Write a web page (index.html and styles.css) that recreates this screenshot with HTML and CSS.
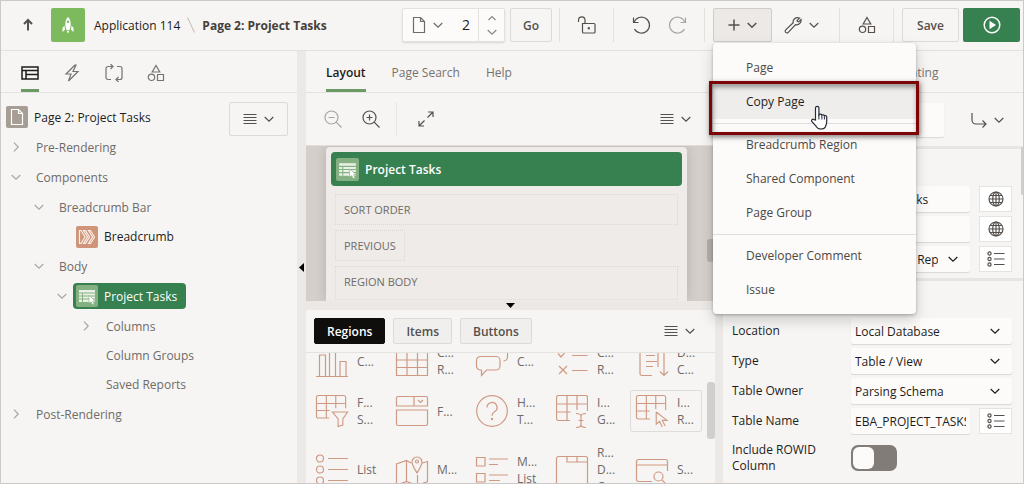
FILE: index.html
```html
<!DOCTYPE html>
<html lang="en">
<head>
  <meta charset="UTF-8" />
  <meta name="viewport" content="width=device-width, initial-scale=1.0"/>
  <title>Page Designer</title>
  <link rel="stylesheet" href="styles.css">
</head>
<body>
  <!-- shared icons -->
  <svg class="sprite" aria-hidden="true">
    <symbol id="chevron" viewBox="0 0 10 10"><path d="M.7 3 5 7.2 9.3 3"/></symbol>
    <symbol id="chevron-up" viewBox="0 0 10 10"><path d="M1.5 7 5 3.5 8.500 7"/></symbol>
    <symbol id="chevron-right" viewBox="0 0 10 10"><path d="M3 .7 7.200 5 3 9.300"/></symbol>
    <symbol id="page" viewBox="0 0 18 18"><path d="M3.500 1.500h7l4 4v11h-11zM10.500 1.500v4h4"/></symbol>
    <symbol id="lines" viewBox="0 0 14 12"><path d="M.5 1.500h13M.5 4.500h13M.5 7.500h13M.5 10.500h13"/></symbol>
    <symbol id="shapes" viewBox="0 0 18 18"><path d="M9 1.500 12.800 8H5.200zM10.500 10.500h6v6h-6z"/><circle cx="4.500" cy="13.300" r="3.200"/></symbol>
    <symbol id="globe" viewBox="0 0 16 16"><circle cx="8" cy="8" r="7"/><ellipse cx="8" cy="8" rx="3.300" ry="7"/><path d="M8 1v14M1 8h14M2 4.500h12M2 11.500h12"/></symbol>
    <symbol id="list" viewBox="0 0 18 16"><circle cx="2.500" cy="2.500" r="1.600"/><circle cx="2.500" cy="8" r="1.600"/><circle cx="2.500" cy="13.500" r="1.600"/><path d="M7 2.500h10.500M7 8h10.500M7 13.500h10.500"/></symbol>
    <symbol id="report" viewBox="0 0 22 22">
      <rect width="22" height="22" rx="2" fill="#85b082" stroke="none"/>
      <path d="M3 5h16v12H3z" fill="#e9f1e4" stroke="none"/>
      <path d="M3 8h16M3 11h16M3 14h16M6.500 8v9" stroke="#85b082"/>
      <path d="M13 10.500v8l2-1.700 1.500 3 1.700-.9-1.500-2.900h2.800z" fill="#fff" stroke="#85b082" stroke-width=".6"/>
    </symbol>
    <symbol id="grid-part" viewBox="0 0 32 32"><path d="M14 25.500H2.500a2 2 0 0 1-2-2v-21a2 2 0 0 1 2-2h27a2 2 0 0 1 2 2V16M.5 9h31M.5 17h14M11 .5v25M21 .5V15"/></symbol>
  </svg>

  <div class="designer">
    <header class="header">
      <nav class="crumbs">
        <button class="icon-button" aria-label="Up"><svg class="icon heavy" width="12" height="14" viewBox="0 0 12 14"><path d="M6 12.500V2.500M2 6 6 2 10 6"/></svg></button>
        <span class="app-icon">
          <svg width="14" height="18" viewBox="0 0 14 18"><path fill="#fff" d="M7 1C5 3 4.200 5 4.300 8.500 4.400 11 5 12.500 5.500 14h3c.5-1.500 1.100-3 1.200-5.500C9.800 5 9 3 7 1zM3.500 9.500 1.500 12v4l2.500-2.200zM10.500 9.500l2 2.500v4L10 13.800zM5.500 14.800h3L7 17.500z"/><circle cx="7" cy="5.800" r="1.200" fill="#7db95d"/></svg>
        </span>
        <a href="#">Application 114</a>
        <svg class="slash" width="8" height="16" viewBox="0 0 8 16"><path d="M.5.5l7 15"/></svg>
        <strong>Page 2: Project Tasks</strong>
      </nav>
      <div class="toolbar">
        <div class="page-picker">
          <button class="picker-list" aria-label="Pages"><svg class="icon" width="18" height="18"><use href="#page"/></svg><svg class="icon" width="10" height="10"><use href="#chevron"/></svg></button>
          <input type="text" value="2" aria-label="Page number">
          <div class="stepper">
            <button aria-label="Next page"><svg class="icon" width="10" height="10"><use href="#chevron-up"/></svg></button>
            <button aria-label="Previous page"><svg class="icon" width="10" height="10"><use href="#chevron"/></svg></button>
          </div>
        </div>
        <button class="button go">Go</button>
        <div class="group">
          <button class="icon-button" aria-label="Unlock"><svg class="icon" width="20" height="20" viewBox="0 0 20 20"><path d="M5.500 8.500h11.500a1 1 0 0 1 1 1V17a1 1 0 0 1-1 1h-10.500a1 1 0 0 1-1-1zM8 8.500V5.200a3.200 3.200 0 0 0-6.500 0V7"/><circle cx="11.800" cy="13.300" r=".6"/></svg></button>
        </div>
        <div class="group undo">
          <button class="icon-button" aria-label="Undo"><svg class="icon" width="20" height="20" viewBox="0 0 20 20"><path d="M2.500 2.500v5h5M3 7.300A8 8 0 1 1 3.500 14"/></svg></button>
          <button class="icon-button faded" aria-label="Redo"><svg class="icon" width="20" height="20" viewBox="0 0 20 20"><path d="M17.500 2.500v5h-5M17 7.300A8 8 0 1 0 16.500 14"/></svg></button>
        </div>
        <div class="group create">
          <div class="menu-anchor">
            <button class="button pressed" aria-label="Create" aria-expanded="true"><svg class="icon bold" width="12" height="12" viewBox="0 0 12 12"><path d="M6 .5v11M.5 6h11"/></svg><svg class="icon bold" width="10" height="10"><use href="#chevron"/></svg></button>
            <ul class="menu">
              <li><button>Page</button></li>
              <li class="current">
                <button>Copy Page</button>
                <span class="callout"></span>
                <svg class="pointer" width="20" height="26" viewBox="0 0 20 26"><path fill="#fff" stroke="#252a38" stroke-width="1.200" d="M5.500 15V3a1.700 1.700 0 0 1 3.400 0v7c.8-1.200 2.700-1 3 .2.900-.8 2.300-.4 2.500.6 1-.5 2.300 0 2.300 1.500V17c0 2-.9 3.500-1.400 5-.6 1.500-2 2-4.600 2-2.300 0-3.500-.8-4.700-2.800L1.800 16.500c-.9-1.700.9-3 2.200-1.900z"/><path stroke="#252a38" d="M8.900 10v4.500M11.900 10.500v4M14.400 11.200v3.300"/></svg>
              </li>
              <li class="rule"></li>
              <li><button>Breadcrumb Region</button></li>
              <li><button>Shared Component</button></li>
              <li><button>Page Group</button></li>
              <li class="rule"></li>
              <li><button>Developer Comment</button></li>
              <li><button>Issue</button></li>
            </ul>
          </div>
          <button class="button flat" aria-label="Utilities"><svg class="icon" width="18" height="18" viewBox="0 0 18 18"><path d="M15.500 2 13 4.500l.5 1 1.200.3L17 3.500c.6 3-1.800 5.800-5.500 5.200L4.300 16.300a1.700 1.700 0 0 1-2.600-2.400L9.200 6.700C8.500 3.500 11.500.7 15.500 2z"/></svg><svg class="icon" width="10" height="10"><use href="#chevron"/></svg></button>
        </div>
        <div class="group">
          <button class="icon-button" aria-label="Shared Components"><svg class="icon" width="18" height="18"><use href="#shapes"/></svg></button>
        </div>
        <div class="group actions">
          <button class="button save">Save</button>
          <button class="button run" aria-label="Save and Run Page"><svg width="18" height="18" viewBox="0 0 18 18"><circle cx="9" cy="9" r="7.800" fill="none" stroke="#fff" stroke-width="1.500"/><path fill="#fff" d="M6.500 4.800v8.400L13 9z"/></svg></button>
        </div>
      </div>
    </header>

    <main class="panes">
      <section class="pane tree-pane">
        <div class="tabs icon-tabs">
          <button class="tab active" aria-label="Rendering"><svg class="icon bold" width="18" height="18" viewBox="0 0 18 18"><path d="M1 3h16v12H1zM1 6.500h16M5 6.500V15M5 10.500h12"/></svg></button>
          <button class="tab" aria-label="Dynamic Actions"><svg class="icon" width="18" height="18" viewBox="0 0 18 18"><path d="M12 1 3 10h5l-2.500 7L15 7.500h-5L13 1z"/></svg></button>
          <button class="tab" aria-label="Processing"><svg class="icon" width="18" height="18" viewBox="0 0 18 18"><path d="M6 15.500H3a2 2 0 0 1-2-2v-9a2 2 0 0 1 2-2h5M5.500 0 8 2.500 5.500 5M12 2.500h3a2 2 0 0 1 2 2v9a2 2 0 0 1-2 2h-4M13.500 13 11 15.500l2.500 2.500"/></svg></button>
          <button class="tab" aria-label="Page Shared Components"><svg class="icon" width="18" height="18"><use href="#shapes"/></svg></button>
        </div>
        <div class="tree-body">
          <ul class="tree">
            <li class="root"><span class="node-icon page-icon"><svg class="icon" width="18" height="18"><use href="#page"/></svg></span>Page 2: Project Tasks</li>
            <li class="level-1"><svg class="icon" width="10" height="10"><use href="#chevron-right"/></svg>Pre-Rendering</li>
            <li class="level-1"><svg class="icon" width="10" height="10"><use href="#chevron"/></svg>Components</li>
            <li class="level-2"><svg class="icon" width="10" height="10"><use href="#chevron"/></svg>Breadcrumb Bar</li>
            <li class="level-3 leaf dark">
              <svg class="node-icon" width="22" height="22" viewBox="0 0 22 22"><rect width="22" height="22" rx="2" fill="#cf947a"/><path fill="none" stroke="#fbeee6" stroke-width="1.200" d="M3.500 4.500H5L9 11l-4 6.500H3.500zM7.500 4.500h2l4 6.500-4 6.500h-2l4-6.500zM12.500 4.500h2l4 6.500-4 6.500h-2l4-6.500z"/></svg>Breadcrumb</li>
            <li class="level-2"><svg class="icon" width="10" height="10"><use href="#chevron"/></svg>Body</li>
            <li class="level-3"><svg class="icon" width="10" height="10"><use href="#chevron"/></svg><span class="selected"><svg width="22" height="22"><use href="#report"/></svg>Project Tasks</span></li>
            <li class="level-4"><svg class="icon" width="10" height="10"><use href="#chevron-right"/></svg>Columns</li>
            <li class="level-4 leaf">Column Groups</li>
            <li class="level-4 leaf">Saved Reports</li>
            <li class="level-1"><svg class="icon" width="10" height="10"><use href="#chevron-right"/></svg>Post-Rendering</li>
          </ul>
          <button class="button tree-menu" aria-label="Tree menu"><svg class="icon" width="14" height="12"><use href="#lines"/></svg><svg class="icon" width="10" height="10"><use href="#chevron"/></svg></button>
        </div>
      </section>

      <button class="splitter" aria-label="Collapse tree"><svg width="5" height="9" viewBox="0 0 5 9"><path d="M5 0v9L0 4.500z"/></svg></button>

      <section class="pane center-pane">
        <div class="tabs">
          <button class="tab active">Layout</button>
          <button class="tab">Page Search</button>
          <button class="tab">Help</button>
        </div>
        <div class="layout-bar">
          <button class="icon-button faded" aria-label="Zoom out"><svg class="icon" width="18" height="18" viewBox="0 0 18 18"><circle cx="7.500" cy="7.500" r="6.500"/><path d="M12.200 12.200 17.500 17.500M4.500 7.500h6"/></svg></button>
          <button class="icon-button" aria-label="Zoom in"><svg class="icon" width="18" height="18" viewBox="0 0 18 18"><circle cx="7.500" cy="7.500" r="6.500"/><path d="M12.200 12.200 17.500 17.500M4.500 7.500h6M7.500 4.500v6"/></svg></button>
          <button class="icon-button expand" aria-label="Expand"><svg class="icon" width="16" height="16" viewBox="0 0 16 16"><path d="M10 1H15v5M15 1 9.500 6.500M6 15H1V10M1 15l5.500-5.500"/></svg></button>
          <button class="icon-button layout-menu" aria-label="Layout menu"><svg class="icon" width="14" height="12"><use href="#lines"/></svg><svg class="icon" width="10" height="10"><use href="#chevron"/></svg></button>
        </div>
        <div class="canvas">
          <div class="sheet">
            <div class="region-title"><svg width="23" height="23"><use href="#report"/></svg>Project Tasks</div>
            <div class="slots">
              <div class="slot">SORT ORDER</div>
              <div class="slot small">PREVIOUS</div>
              <div class="slot">REGION BODY</div>
            </div>
          </div>
          <span class="thumb canvas-thumb"></span>
        </div>
        <button class="splitter horizontal" aria-label="Collapse gallery"><svg width="9" height="5" viewBox="0 0 9 5"><path d="M0 0h9L4.500 5z"/></svg></button>
        <div class="gallery">
          <div class="gallery-bar">
            <button class="pill active">Regions</button>
            <button class="pill">Items</button>
            <button class="pill">Buttons</button>
            <button class="icon-button gallery-menu" aria-label="Gallery menu"><svg class="icon" width="14" height="12"><use href="#lines"/></svg><svg class="icon" width="10" height="10"><use href="#chevron"/></svg></button>
          </div>
          <div class="gallery-view">
            <ul class="gallery-grid">
              <li><svg width="32" height="32" viewBox="0 0 32 32"><path d="M0 31.500h32M3.500 31V10h6v21M13.500 31V3h6v28M24 31V16.500h6V31"/></svg><span>C...</span></li>
              <li><svg width="32" height="32" viewBox="0 0 32 32"><path d="M.5.5h31v30H.5zM.5 7.500h31M.5 15h31M.5 22.500h31M11 .5v30M21.500.5v30"/></svg><span>C...<br>R...</span></li>
              <li><svg width="32" height="32" viewBox="0 0 32 32"><path d="M4.500 11.500H20a4 4 0 0 1 4 4v5.500a4 4 0 0 1-4 4h-9.500L5.500 30.500V25h-1a4 4 0 0 1-4-4v-5.500a4 4 0 0 1 4-4zM9 7.500a4 4 0 0 1 4-4h14.500a4 4 0 0 1 4 4V12a4 4 0 0 1-4 4"/></svg><span>C...</span></li>
              <li><svg width="32" height="32" viewBox="0 0 32 32"><path d="M2 8.500 5 12l5-6M16 10.500h15.500M3 21l8 8M11 21l-8 8M16 25.500h15.500"/></svg><span>C...<br>R...</span></li>
              <li><svg width="32" height="32" viewBox="0 0 32 32"><path d="M16 30.500H6a2 2 0 0 1-2-2V2h18v20M10 10.500h9M10 16.500h11M10 21.500h7M28 2v28M24 26.500l4 4 4-4"/></svg><span>D...<br>C...</span></li>

              <li><svg width="34" height="34" viewBox="0 0 34 34"><path d="M14 24.500H2.500a2 2 0 0 1-2-2v-20a2 2 0 0 1 2-2h27a2 2 0 0 1 2 2V14M.5 9h31M.5 16.500h14M11 .5v24M21 .5V14M17.500 18h16l-5 7.500V32l-5 1.500v-8z"/></svg><span>F...<br>S...</span></li>
              <li><svg width="32" height="32" viewBox="0 0 32 32"><path d="M2 1.500h28a1.500 1.500 0 0 1 1.500 1.500v8H.5V3A1.500 1.500 0 0 1 2 1.500zM18 1.500V11M27 5l-2.500 2.500L22 5M.5 15h31v14a1.500 1.500 0 0 1-1.500 1.500H2A1.500 1.500 0 0 1 .5 29z"/></svg><span>F...</span></li>
              <li><svg width="32" height="32" viewBox="0 0 32 32"><circle cx="16" cy="16" r="15.300"/><path d="M11 12.500a5 5 0 1 1 7.500 4.300c-2 1.200-2.500 2-2.500 4"/><circle cx="16" cy="24" r=".6"/></svg><span>H...<br>T...</span></li>
              <li><svg width="32" height="32"><use href="#grid-part"/><path d="M20 18.500q5 0 5 3v8q0 3-5 3M30 18.500q-5 0-5 3v8q0 3 5 3M22.500 25.500h5"/></svg><span>I...<br>G...</span></li>
              <li class="picked"><svg width="34" height="34" viewBox="0 0 34 34"><path d="M15 25.500H2.500a2 2 0 0 1-2-2v-21a2 2 0 0 1 2-2h27a2 2 0 0 1 2 2V16M.5 9h31M.5 17h14M11 .5v25M21 .5V15M21.500 18v13l3.500-3 3 6M21.500 18 33 27h-5l3 6"/></svg><span>I...<br>R...</span></li>

              <li><svg width="32" height="32" viewBox="0 0 32 32"><circle cx="4" cy="4.500" r="3.500"/><circle cx="4" cy="15.500" r="3.500"/><circle cx="4" cy="26.500" r="3.500"/><path d="M12 4.500h20M12 15.500h20M12 26.500h20"/></svg><span>List</span></li>
              <li><svg width="32" height="32" viewBox="0 0 32 32"><path d="M15 9 10.500 6.500.500 10v21l10-3.500 11 4 10-4v-20l-5 1.500M10.500 6.500v21M21.500 21v10M21 19c-3-5-5-8-5-11a5 5 0 0 1 10 0c0 3-2 6-5 11z"/><circle cx="21" cy="7.500" r="1.500"/></svg><span>M...</span></li>
              <li><svg width="32" height="32" viewBox="0 0 32 32"><path d="M.5 3.500h8.500V12H.5zM.5 19.500h8.500V28H.5zM13 5h19M13 10.500h9M13 21h19M13 26.500h11"/></svg><span>M...<br>List</span></li>
              <li><svg width="32" height="32" viewBox="0 0 32 32"><path d="M2.500 2.500h27a2 2 0 0 1 2 2v27H.5v-27a2 2 0 0 1 2-2zM11 2.500V8h20.500M21 2.500V8"/></svg><span>R...<br>D...<br>C...</span></li>
              <li><svg width="32" height="32" viewBox="0 0 32 32"><path d="M16 27.500H2.500a2 2 0 0 1-2-2v-18a2 2 0 0 1 2-2h27a2 2 0 0 1 2 2V17M.5 11h31M26 26l5 5"/><circle cx="22.500" cy="22.500" r="4.500"/></svg><span>S...</span></li>
            </ul>
            <span class="thumb gallery-thumb"></span>
          </div>
        </div>
      </section>

      <div class="splitter narrow"></div>

      <section class="pane property-pane">
        <div class="tabs">
          <button class="tab">Region</button>
          <button class="tab">Attributes</button>
          <button class="tab">Printing</button>
        </div>
        <div class="search-bar">
          <input type="search" aria-label="Filter properties">
          <button class="icon-button" aria-label="Go to group"><svg class="icon" width="16" height="16" viewBox="0 0 16 16"><path d="M1 1v7a4 4 0 0 0 4 4h10M11.500 8.500 15 12l-3.500 3.500"/></svg><svg class="icon" width="10" height="10"><use href="#chevron"/></svg></button>
        </div>
        <div class="properties">
          <div class="property-group">
            <h2>Identification</h2>
            <div class="field">
              <label for="title">Title</label>
              <input type="text" id="title" value="Project Tasks">
              <button class="side" aria-label="Translate title"><svg class="icon" width="16" height="16"><use href="#globe"/></svg></button>
            </div>
            <div class="field">
              <label for="name">Name</label>
              <input type="text" id="name">
              <button class="side" aria-label="Translate name"><svg class="icon" width="16" height="16"><use href="#globe"/></svg></button>
            </div>
            <div class="field">
              <label for="region-type">Type</label>
              <div class="select"><select id="region-type"><option>Interactive Report</option></select><svg class="icon" width="10" height="10"><use href="#chevron"/></svg></div>
              <button class="side" aria-label="Pick type"><svg class="icon" width="18" height="16"><use href="#list"/></svg></button>
            </div>
          </div>
          <div class="property-group">
            <h2>Source</h2>
            <div class="field">
              <label for="location">Location</label>
              <div class="select wide"><select id="location"><option>Local Database</option></select><svg class="icon" width="10" height="10"><use href="#chevron"/></svg></div>
            </div>
            <div class="field">
              <label for="source-type">Type</label>
              <div class="select wide"><select id="source-type"><option>Table / View</option></select><svg class="icon" width="10" height="10"><use href="#chevron"/></svg></div>
            </div>
            <div class="field">
              <label for="owner">Table Owner</label>
              <div class="select wide"><select id="owner"><option>Parsing Schema</option></select><svg class="icon" width="10" height="10"><use href="#chevron"/></svg></div>
            </div>
            <div class="field">
              <label for="table">Table Name</label>
              <input type="text" id="table" value="EBA_PROJECT_TASKS">
              <button class="side" aria-label="Pick table"><svg class="icon" width="18" height="16"><use href="#list"/></svg></button>
            </div>
            <div class="field switch-field">
              <label for="rowid">Include ROWID Column</label>
              <input type="checkbox" id="rowid" class="switch">
            </div>
          </div>
          <span class="thumb property-thumb"></span>
        </div>
      </section>
    </main>
  </div>
</body>
</html>
```
FILE: styles.css
```css
* {
  box-sizing: border-box;
}
body {
  margin: 0;
  font-family: 'Open Sans', 'Noto Sans', sans-serif;
  font-size: 12px;
  color: #1f1d1b;
  background-color: #f6f5f3;
}
button, input, select {
  font: inherit;
  color: inherit;
  margin: 0;
}
button {
  padding: 0;
  border: none;
  background: none;
  cursor: pointer;
}
ul {
  list-style: none;
  margin: 0;
  padding: 0;
}
.sprite {
  display: none;
}
.icon {
  flex: none;
  fill: none;
  stroke: currentColor;
  stroke-width: 1.2;
}
.icon.bold {
  stroke-width: 1.5;
}
.icon.heavy {
  stroke-width: 2;
}
.designer {
  display: flex;
  flex-direction: column;
  height: 100vh;
  border: 1px solid #cbcac8;
  overflow: hidden;
}

/* header */
.header {
  display: flex;
  justify-content: space-between;
  align-items: center;
  flex: none;
  height: 50px;
  padding: 0 3px 2px 20px;
  border-bottom: 1px solid #e3e1de;
}
.crumbs, .toolbar, .group {
  display: flex;
  align-items: center;
}
.crumbs a, .crumbs strong {
  padding-top: 2px;
}
.crumbs a {
  color: #1f1d1b;
  text-decoration: none;
  margin-left: 9px;
}
.crumbs strong {
  font-weight: 700;
  color: #45403c;
}
.app-icon {
  display: flex;
  align-items: center;
  justify-content: center;
  width: 34px;
  height: 34px;
  margin-left: 16px;
  border-radius: 2px;
  background-color: #7db95d;
}
.slash {
  margin: 0 7px;
  fill: none;
  stroke: #bcb8b4;
}
.icon-button {
  display: flex;
  align-items: center;
  justify-content: center;
  gap: 7px;
  color: #55504c;
}
.crumbs .icon-button {
  width: 14px;
}
.icon-button.faded {
  color: #a8a5a2;
}
.button {
  display: flex;
  align-items: center;
  justify-content: center;
  gap: 7px;
  height: 34px;
  border: 1px solid #dcdad7;
  border-radius: 2px;
  color: #55504c;
}
.page-picker {
  display: flex;
  width: 103px;
  height: 34px;
  margin-right: 5px;
  border: 1px solid #e3e1de;
  border-radius: 2px;
  background-color: #fcfbfa;
  box-shadow: 0 1px 2px rgba(0, 0, 0, 0.12);
}
.picker-list {
  display: flex;
  align-items: center;
  gap: 5px;
  padding-left: 7px;
  color: #6f6b68;
}
.page-picker input {
  flex: 1;
  min-width: 0;
  padding: 0 8px;
  border: none;
  background: none;
  font-size: 14px;
  text-align: right;
}
.stepper {
  display: flex;
  flex-direction: column;
  justify-content: space-evenly;
  align-items: center;
  width: 26px;
  border-left: 1px solid #e3e1de;
  color: #8b8784;
}
.stepper button {
  display: flex;
}
.go, .save {
  padding-top: 2px;
  font-weight: 600;
}
.go {
  width: 42px;
  margin-right: 7px;
}
.group {
  height: 34px;
  border-left: 1px solid #e3e1de;
}
.group > .icon-button {
  width: 53px;
}
.undo {
  padding: 0 8px;
}
.undo > .icon-button {
  width: 37px;
}
.create {
  padding: 0 8px;
}
.menu-anchor {
  position: relative;
}
.create .button {
  width: 59px;
}
.pressed {
  border-color: #cfccc9;
  background-color: #ece9e6;
}
.button.flat {
  border-color: transparent;
}
.actions {
  gap: 4px;
  padding-left: 8px;
}
.actions .button {
  width: 57px;
}
.button.run {
  border: none;
  background-color: #37804f;
}

/* create menu */
.menu {
  position: absolute;
  z-index: 5;
  top: 35px;
  left: 0;
  width: 203px;
  padding: 8px 0 7px;
  border-radius: 4px;
  background-color: #fcfbf9;
  box-shadow: 0 1px 3px rgba(0, 0, 0, 0.25), 0 6px 14px rgba(0, 0, 0, 0.18);
}
.menu li {
  position: relative;
}
.menu button {
  width: 100%;
  height: 34px;
  padding-left: 33px;
  text-align: left;
  color: #4d4845;
}
.menu .current button {
  color: #1f1d1b;
  background-color: #eeedec;
}
.menu .rule {
  height: 1px;
  margin: 4px 0;
  background-color: #e0deda;
}
.callout {
  position: absolute;
  z-index: 1;
  top: -4px;
  left: -4px;
  right: -3px;
  height: 54px;
  border: 3px solid #7d0508;
  box-shadow: 1px 2px 5px rgba(0, 0, 0, 0.5), inset 1px 3px 5px rgba(0, 0, 0, 0.4);
  pointer-events: none;
}
.pointer {
  position: absolute;
  z-index: 2;
  top: 20px;
  left: 97px;
  fill: none;
}

/* panes */
.panes {
  display: flex;
  flex: 1;
  min-height: 0;
}
.pane {
  display: flex;
  flex-direction: column;
  min-width: 0;
}
.tree-pane {
  width: 296px;
}
.center-pane {
  flex: 1;
}
.property-pane {
  width: 300px;
}
.splitter {
  display: flex;
  align-items: center;
  justify-content: center;
  flex: none;
  width: 9px;
  background-color: #ece8e5;
}
.splitter.narrow {
  width: 8px;
}
.splitter.horizontal {
  width: 100%;
  height: 9px;
}
.tabs {
  display: flex;
  flex: none;
  gap: 26px;
  height: 42px;
  padding: 0 20px;
  border-bottom: 1px solid #e5e3e0;
}
.icon-tabs {
  gap: 24px;
}
.property-pane .tabs {
  gap: 29px;
}
.tab {
  display: flex;
  align-items: center;
  padding-top: 5px;
  border-bottom: 3px solid transparent;
  color: #767270;
}
.tab.active {
  color: #1f1d1b;
  font-weight: 600;
  border-color: #6c9a66;
}

/* rendering tree */
.tree-body {
  display: flex;
  justify-content: space-between;
  align-items: flex-start;
  padding: 9px 9px 0 5px;
}
.tree-menu {
  width: 59px;
}
.tree li {
  display: flex;
  align-items: center;
  gap: 15px;
  height: 30px;
  color: #6f6b68;
  white-space: nowrap;
}
.tree li > .icon {
  color: #aaa6a3;
}
.tree .root {
  gap: 6px;
  color: #1f1d1b;
}
.tree .leaf {
  height: 29px;
}
.page-icon {
  display: flex;
  align-items: center;
  justify-content: center;
  width: 22px;
  height: 22px;
  border-radius: 2px;
  background-color: #a69d95;
  color: #fff;
}
.tree .level-1 {
  padding-left: 5px;
}
.tree .level-2 {
  padding-left: 28px;
}
.tree .level-3 {
  padding-left: 51px;
  gap: 6px;
}
.tree .level-3.leaf {
  padding-left: 70px;
}
.tree .level-4 {
  padding-left: 75px;
}
.tree .level-4.leaf {
  padding-left: 100px;
}
.tree .dark {
  color: #1f1d1b;
}
.selected {
  display: flex;
  align-items: center;
  gap: 6px;
  height: 26px;
  padding: 0 9px 0 3px;
  border-radius: 4px;
  background-color: #37804f;
  color: #fff;
}

/* layout */
.layout-bar {
  display: flex;
  align-items: center;
  flex: none;
  height: 53px;
  padding: 0 24px 0 18px;
  border-bottom: 1px solid #e0ddda;
}
.layout-bar .icon-button {
  height: 34px;
}
.layout-bar .icon-button:nth-child(2) {
  margin-left: 20px;
  padding-right: 16px;
  border-right: 1px solid #e8e6e3;
}
.layout-bar .expand {
  margin-left: 21px;
}
.layout-bar .layout-menu {
  margin-left: auto;
}
.canvas {
  position: relative;
  flex: none;
  height: 155px;
  padding: 1px 28px 0 20px;
  overflow: hidden;
  background-color: #d4cfcb;
}
.sheet {
  height: 100%;
  padding: 5px 5px 0;
  border-radius: 4px 4px 0 0;
  background-color: #eeebe8;
  box-shadow: 0 0 12px rgba(0, 0, 0, 0.15);
}
.region-title {
  display: flex;
  align-items: center;
  gap: 6px;
  height: 34px;
  padding-left: 5px;
  border-radius: 4px;
  background-color: #37804f;
  color: #fff;
  font-weight: 600;
}
.slots {
  display: flex;
  flex-direction: column;
  gap: 5px;
  padding: 8px 4px 0;
}
.slot {
  height: 31px;
  padding: 0 8px;
  border: 1px dotted #dcd8d4;
  font-size: 11px;
  line-height: 29px;
  color: #6f6b68;
}
.slot.small {
  align-self: flex-start;
}
.slot:last-child {
  height: 34px;
}
.thumb {
  position: absolute;
  border-radius: 3px;
  background-color: #d0cfcd;
}
.canvas-thumb {
  top: 93px;
  right: 0;
  width: 8px;
  height: 23px;
  background-color: #b3afac;
}

/* gallery */
.gallery {
  display: flex;
  flex-direction: column;
  flex: 1;
  min-height: 0;
}
.gallery-bar {
  display: flex;
  align-items: center;
  flex: none;
  gap: 8px;
  height: 43px;
  padding: 0 20px 0 8px;
  border-bottom: 1px solid #e5e3e0;
}
.pill {
  height: 26px;
  padding: 0 12px;
  border: 1px solid #dcdad7;
  border-radius: 2px;
  background-color: #f0efed;
  color: #55504c;
  font-weight: 600;
}
.pill.active {
  border-color: #100e0c;
  background-color: #100e0c;
  color: #fff;
}
.gallery-menu {
  margin-left: auto;
}
.gallery-view {
  position: relative;
  flex: 1;
  min-height: 0;
  overflow: hidden;
}
.gallery-grid {
  display: grid;
  grid-template-columns: repeat(5, minmax(0, 1fr));
  gap: 8px;
  margin-top: -13px;
  padding: 0 13px 0 4px;
}
.gallery-grid li {
  display: flex;
  align-items: center;
  gap: 9px;
  min-height: 42px;
  padding: 3px 5px;
  border: 1px solid transparent;
  border-radius: 2px;
  line-height: 17px;
  color: #6f6b68;
  white-space: nowrap;
}
.gallery-grid svg {
  flex: none;
  width: 32px;
  overflow: visible;
  fill: none;
  stroke: #cf9a84;
  stroke-width: 1.2;
}
.gallery-grid .picked {
  border-color: #dfdddb;
}
.gallery-thumb {
  top: 29px;
  right: 0;
  width: 8px;
  height: 57px;
}

/* property editor */
.search-bar {
  display: flex;
  align-items: center;
  justify-content: space-between;
  flex: none;
  height: 53px;
  padding: 0 19px 0 9px;
}
.search-bar input {
  width: 212px;
  height: 34px;
}
.search-bar input, .field input[type="text"], .select {
  padding: 0 4px;
  border: none;
  border-radius: 2px;
  background-color: #fcfbfa;
  box-shadow: 0 1px 1px rgba(0, 0, 0, 0.12);
}
.properties {
  position: relative;
  flex: 1;
  min-height: 0;
  overflow: hidden;
}
.property-group {
  display: flex;
  flex-direction: column;
  gap: 4px;
  padding: 0 11px 6px 9px;
  border-top: 3px solid #e8e4e1;
}
.property-group h2 {
  margin: 0;
  font-size: 12px;
  font-weight: 600;
  line-height: 33px;
}
.field {
  display: flex;
  align-items: center;
}
.field label {
  flex: none;
  width: 119px;
  padding-right: 20px;
  line-height: 16px;
}
.field input[type="text"], .select {
  flex: 1;
  min-width: 0;
  height: 26px;
}
.field .select {
  display: flex;
  align-items: center;
  gap: 10px;
  padding-right: 12px;
}
.select select {
  appearance: none;
  flex: 1;
  min-width: 0;
  padding: 0;
  border: none;
  background: none;
}
.side {
  display: flex;
  align-items: center;
  justify-content: center;
  width: 33px;
  height: 26px;
  margin-left: 9px;
  border: 1px solid #e5e3e0;
  background-color: #fff;
  color: #55504c;
}
.switch-field {
  margin-top: 4px;
}
.switch {
  appearance: none;
  display: flex;
  width: 46px;
  height: 26px;
  padding: 2px;
  border-radius: 7px;
  background-color: #817c78;
}
.switch::before {
  content: "";
  width: 21px;
  height: 22px;
  border-radius: 6px;
  background-color: #fcfbfa;
}
.property-thumb {
  top: 1px;
  right: 0;
  width: 2px;
  height: 48px;
}
```
